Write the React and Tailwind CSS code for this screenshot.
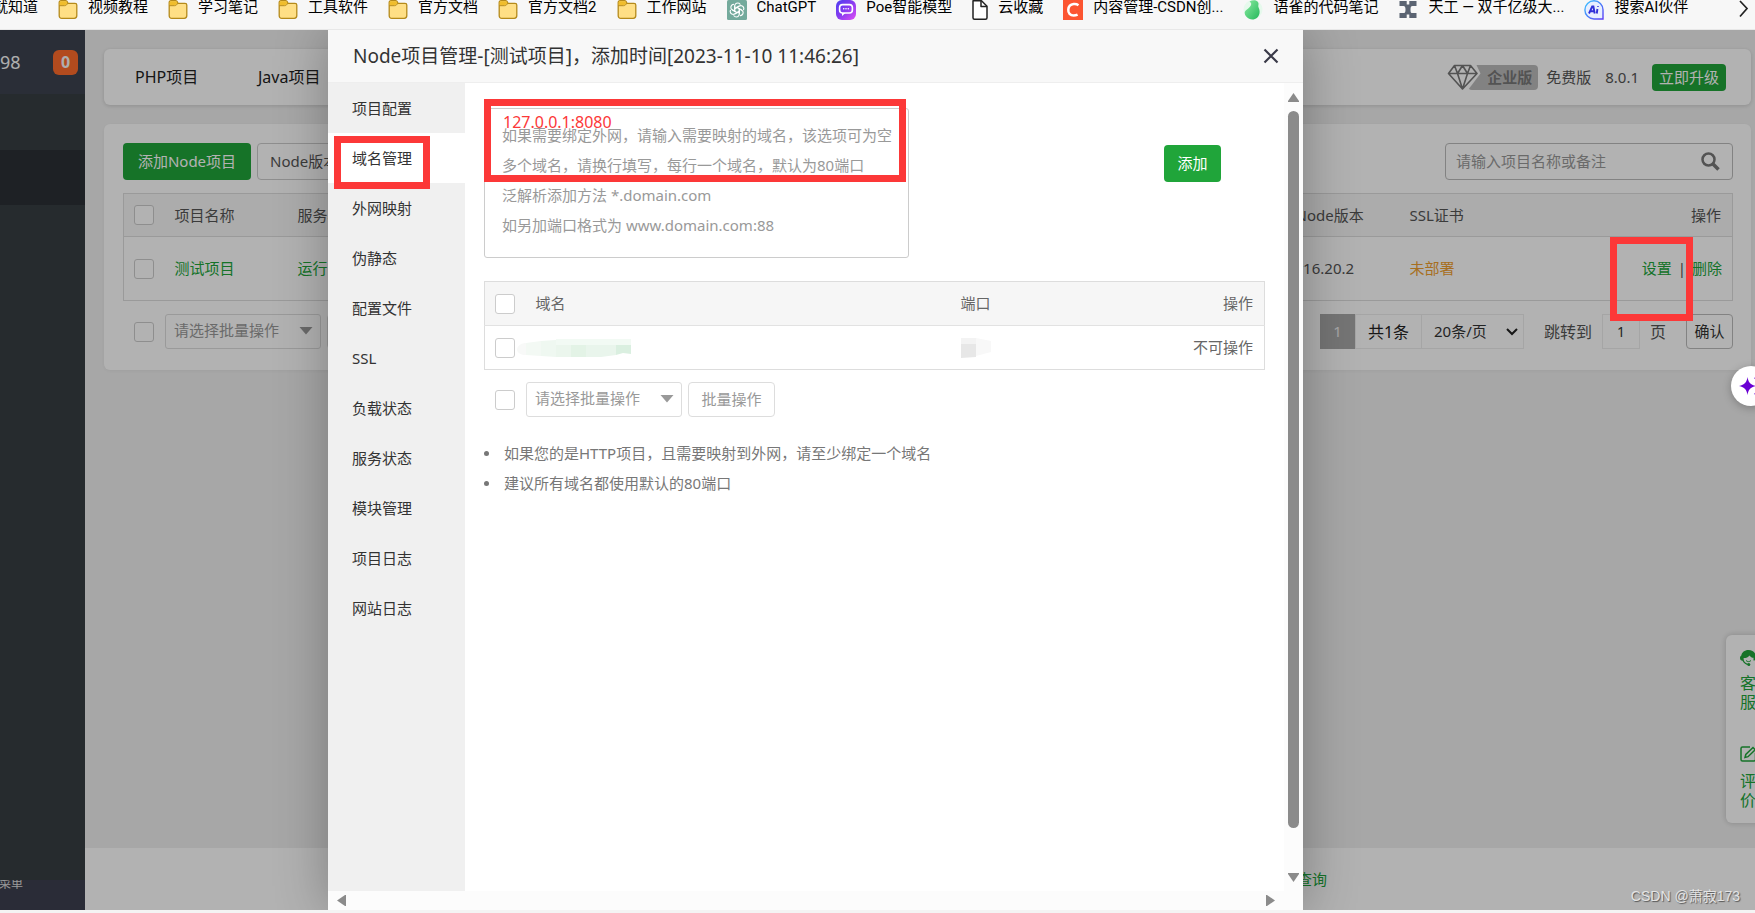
import React from "react";

const font = "font-['Noto_Sans','Noto_Sans_CJK_SC',sans-serif]";

function Folder() {
  return (
    <svg className="size-5 shrink-0" viewBox="0 0 20 20" fill="none">
      <path d="M1.2 15.5V2.5c0-1 .7-1.8 1.8-1.8h4.6c.9 0 1.5.5 1.8 1.3l.5 1.3H17c1 0 1.8.8 1.8 1.8v10.5c0 1.6-1 2.8-2.6 2.8H3.8c-1.6 0-2.6-1.2-2.6-2.900z" fill="#ffdf85" stroke="#b58a1b" strokeWidth="1.300" />
      <path d="M1.600 5.200V2.600c0-.8.5-1.400 1.400-1.400h4.500c.7 0 1.200.4 1.400 1l.3 1c-.4 1.200-1.200 2-2.500 2z" fill="#f0bd2d" />
      <path d="M1.300 5.700h5.200c1.600 0 2.400-.9 3-2.300" stroke="#b58a1b" strokeWidth="1" />
    </svg>
  );
}

function ChatGPT() {
  return (
    <svg className="size-5 shrink-0" viewBox="0 0 20 20" fill="none">
      <rect width="20" height="20" rx="1.500" fill="#74aa9c" />
      <g stroke="#fff" strokeWidth="1.100" strokeLinejoin="round" strokeLinecap="round">
        {[0, 60, 120, 180, 240, 300].map((a) => (
          <path key={a} transform={`rotate(${a} 10 10)`} d="M7.700 11.300V6.200c0-2 1.300-3.200 3-3.200 1 0 1.900.5 2.400 1.200M7.700 8.700l4.500-2.600" />
        ))}
      </g>
    </svg>
  );
}

function Poe() {
  return (
    <svg className="size-5 shrink-0" viewBox="0 0 20 20" fill="none">
      <defs>
        <linearGradient id="poe" x1="0" y1="0" x2="1" y2="1">
          <stop offset="0" stopColor="#4b3ff0" />
          <stop offset="0.500" stopColor="#8a3cf0" />
          <stop offset="1" stopColor="#e04ff5" />
        </linearGradient>
      </defs>
      <rect width="20" height="20" rx="6" fill="url(#poe)" />
      <rect x="3.600" y="4.600" width="12.800" height="8.400" rx="3" stroke="#fff" strokeWidth="1.600" />
      <path d="M6 13v3l3.500-3" fill="#fff" />
      <path d="M7.700 8.800h.01M10 8.800h.01M12.300 8.800h.01" stroke="#fff" strokeWidth="1.600" strokeLinecap="round" />
    </svg>
  );
}

function FileIcon() {
  return (
    <svg className="h-5 w-4 shrink-0" viewBox="2 0 16 20" fill="none" stroke="#222" strokeWidth="1.500" strokeLinejoin="round">
      <path d="M3 .8h8.500L17 6.200v11.500c0 .9-.6 1.500-1.500 1.500h-11c-.9 0-1.500-.6-1.500-1.500z" fill="#fff" />
      <path d="M11 .8v5.700h6" />
    </svg>
  );
}

function CsdnIcon() {
  return (
    <svg className="size-5 shrink-0" viewBox="0 0 20 20" fill="none">
      <rect width="20" height="20" fill="#fc5531" />
      <path d="M15.500 5.200c-1.400-1-3-1.400-4.800-1.200-3.200.3-5.200 2.500-5.400 5.600-.3 3.600 2 5.900 5.300 5.900 1.500 0 2.800-.3 4-.9" stroke="#fff" strokeWidth="2.500" />
    </svg>
  );
}

function YuqueIcon() {
  return (
    <svg className="size-5 shrink-0" viewBox="0 0 20 20" fill="none">
      <defs>
        <linearGradient id="yq" x1="0" y1="0" x2="1" y2="1">
          <stop offset="0" stopColor="#8deba3" />
          <stop offset="1" stopColor="#25b85a" />
        </linearGradient>
      </defs>
      <circle cx="10" cy="9.500" r="9.500" fill="#e6f9ec" />
      <path d="M6.500 1.500c3-1.800 6-1.800 8 0 .9.900 1.100 1.800 1 2.600 0 1.300-.6 2 .2 3.600 1.700 3.600 1 7.600-1.600 10-3 2.600-7.600 2.600-11.100-1.400-2-2.600-1.600-5.200.6-6.600C6 8.300 8.600 5.700 8.200 3.700 8 2.700 7.300 2 6.500 1.500z" fill="url(#yq)" />
    </svg>
  );
}

function TiangongIcon() {
  return (
    <svg className="size-5 shrink-0" viewBox="0 0 20 20" fill="#5b6472">
      <path d="M1.500 1h7.200v3.500h2.600V1h7.200v5h-4c-1.500 0-2 1-2 3.700s.5 3.300 2 3.300h4v5h-7.200v-3.500H8.700V18H1.500v-5h4c1.500 0 2-.8 2-3.300S7 6 5.500 6h-4z" />
    </svg>
  );
}

function AiIcon() {
  return (
    <svg className="size-5 shrink-0" viewBox="0 0 20 20" fill="none">
      <defs>
        <linearGradient id="ai" x1="0" y1="0" x2="1" y2="1">
          <stop offset="0" stopColor="#3cc8ff" />
          <stop offset="1" stopColor="#5b3df5" />
        </linearGradient>
      </defs>
      <path d="M10 .8a9 9 0 0 1 9 9V19h-9A9 9 0 0 1 10 .8z" fill="#e8efff" stroke="url(#ai)" strokeWidth="1.400" />
      <path d="M5 13.500 8.200 6.500h1.200l1.300 7M6.800 11.200h3.400M13.400 9l-.6 4.500M14 6v.8" stroke="#3030d8" strokeWidth="1.900" />
    </svg>
  );
}

const bookmarks = [
  [Folder, "视频教程"],
  [Folder, "学习笔记"],
  [Folder, "工具软件"],
  [Folder, "官方文档"],
  [Folder, "官方文档2"],
  [Folder, "工作网站"],
  [ChatGPT, "ChatGPT"],
  [Poe, "Poe智能模型"],
  [FileIcon, "云收藏"],
  [CsdnIcon, "内容管理-CSDN创..."],
  [YuqueIcon, "语雀的代码笔记"],
  [TiangongIcon, "天工 — 双千亿级大..."],
  [AiIcon, "搜索AI伙伴"],
];

function BookmarkBar() {
  return (
    <nav aria-label="书签" className="flex h-[30px] shrink-0 items-start overflow-hidden border-b border-[#e8e8e8] bg-[#f7f7f7] font-['Roboto','Noto_Sans_CJK_SC',sans-serif] text-[15px] leading-[15px] text-black">
      <a href="#b" className="-ml-[7px] mr-5 whitespace-nowrap">就知道</a>
      {bookmarks.map(([Icon, label]) => (
        <a key={label} href="#b" className="mr-5 flex shrink-0 gap-[10px] whitespace-nowrap">
          <Icon />
          <span>{label}</span>
        </a>
      ))}
      <button aria-label="更多书签" className="ml-auto mr-1">
        <svg className="h-[18px] w-4" viewBox="0 0 16 18" fill="none" stroke="#222" strokeWidth="1.700">
          <path d="M5 1l7 7.500L5 16.500" />
        </svg>
      </button>
    </nav>
  );
}

function Check({ label }) {
  return <input type="checkbox" aria-label={label} className="block size-5 shrink-0 appearance-none rounded-[3px] border border-[#ccc] bg-white" />;
}

function BulkSelect() {
  return (
    <div className="relative h-[35px] w-[156px]">
      <select aria-label="批量操作" className="size-full appearance-none rounded-[3px] border border-[#ddd] bg-white pl-2 pb-[2px] text-[15px] text-[#999]">
        <option>请选择批量操作</option>
      </select>
      <svg className="pointer-events-none absolute right-2 top-[13px] h-2 w-[14px]" viewBox="0 0 14 8" fill="#999">
        <path d="M.5 0h13L7 7.500z" />
      </svg>
    </div>
  );
}

function Sidebar() {
  return (
    <aside className="flex w-[85px] shrink-0 flex-col bg-[#373e43]">
      <div className="flex h-16 items-center justify-between bg-[#3d434f] pr-[7px] text-lg text-[#fafafa]">
        <span>98</span>
        <span className="flex size-[25px] items-center justify-center rounded-md bg-[#ff6c2c] text-base font-bold">0</span>
      </div>
      <div className="h-14" />
      <div className="h-[55px] bg-[#2c3036]" />
      <div className="flex-1" />
      <div className="h-[30px] overflow-hidden bg-[#3d404f] text-xs leading-[8px] text-[#ddd]">
        <span className="-ml-px">菜单</span>
      </div>
    </aside>
  );
}

function TopPanel() {
  return (
    <header className="flex h-14 items-center rounded-md bg-white pl-[31px] pr-[25px] text-[15px] text-[#555] shadow-[0_1px_4px_rgba(0,0,0,0.15)]">
      <a href="#php" className="w-[123px] text-base text-[#222]">PHP项目</a>
      <a href="#java" className="text-base text-[#222]">Java项目</a>
      <div className="ml-auto flex items-center">
        <svg className="relative -mr-[13px] h-[26px] w-[34px]" viewBox="0 0 34 26" fill="none" stroke="#777" strokeWidth="1.600" strokeLinejoin="round">
          <path d="M0 0h29l4.500 9.500L21 26H0z" fill="#fff" stroke="none" />
          <path d="M7.500 1.500h16l6.500 8L15.500 25 1.500 9.500zM1.500 9.500H30M7.500 1.500l3 8 5 15.500 5-15.500 3-8M10.500 9.500l5-8 5 8" />
        </svg>
        <span className="flex h-[25px] w-[70px] items-center justify-end rounded-sm bg-[#bbb] pr-[6px] font-bold text-[#777]">企业版</span>
        <span className="ml-2">免费版</span>
        <span className="ml-[14px]">8.0.1</span>
        <button className="ml-[13px] h-[27px] w-[74px] rounded bg-[#20a53a] text-white">立即升级</button>
      </div>
    </header>
  );
}

function ProjectPanel() {
  return (
    <section className="mt-[19px] h-[246px] rounded-md bg-white pl-[19px] pr-[18px] pt-[19px] text-[15px] text-[#555] shadow-[0_1px_4px_rgba(0,0,0,0.05)]">
      <div className="flex h-[37px] gap-[6px]">
        <button className="w-32 rounded bg-[#20a53a] text-white">添加Node项目</button>
        <button className="rounded border border-[#ccc] px-3">Node版本管理</button>
        <label className="ml-auto flex w-[288px] items-center rounded-sm border border-[#bbb] pl-[10px] pr-3">
          <input aria-label="搜索" placeholder="请输入项目名称或备注" className="min-w-0 flex-1 bg-transparent outline-none placeholder:text-[#999]" />
          <svg className="size-[19px]" viewBox="0 0 19 19" fill="none" stroke="#777">
            <circle cx="7.500" cy="7.500" r="6" strokeWidth="2.500" />
            <path d="M12 12l5.500 5.500" strokeWidth="3.500" />
          </svg>
        </label>
      </div>
      <table className="mt-[13px] w-full table-fixed border border-[#ddd] text-left">
        <thead>
          <tr className="h-[43px] border-b border-[#ddd] bg-[#f6f6f6]">
            <th className="w-[41px] pl-[10px]"><Check label="全选项目" /></th>
            <th className="w-[123px] pl-[10px] font-normal">项目名称</th>
            <th className="pl-[10px] font-normal">服务状态</th>
            <th className="w-[114px] pl-[10px] font-normal">Node版本</th>
            <th className="w-[160px] pl-[10px] font-normal">SSL证书</th>
            <th className="w-[173px] pr-[11px] text-right font-normal">操作</th>
          </tr>
        </thead>
        <tbody>
          <tr className="h-16">
            <td className="pl-[10px]"><Check label="测试项目" /></td>
            <td className="pl-[10px]"><a href="#p" className="text-[#20a53a]">测试项目</a></td>
            <td className="pl-[10px] text-[#20a53a]">运行中</td>
            <td className="pl-[10px]">v16.20.2</td>
            <td className="pl-[10px] text-[#f0a030]">未部署</td>
            <td className="pr-[10px]">
              <div className="flex justify-end gap-[6px]">
                <a href="#set" className="text-[#20a53a]">设置</a>
                <span>|</span>
                <a href="#del" className="text-[#20a53a]">删除</a>
              </div>
            </td>
          </tr>
        </tbody>
      </table>
      <div className="mt-[13px] flex items-center">
        <div className="ml-[11px] mr-[11px]"><Check label="全选" /></div>
        <BulkSelect />
        <button className="ml-[6px] h-[35px] rounded-sm border border-[#ddd] px-3 text-[#999]">批量操作</button>
        <div className="ml-auto flex h-[35px] items-center text-[#333]">
          <button className="h-full w-[35px] bg-[#a8a8a8] text-[#eee]">1</button>
          <span className="flex h-full w-[67px] items-center justify-center border border-[#ececec] text-base text-[#222]">共1条</span>
          <span className="relative h-full w-[102px]">
            <select aria-label="每页条数" className="size-full appearance-none border border-l-0 border-[#ececec] pl-3">
              <option>20条/页</option>
            </select>
            <svg className="pointer-events-none absolute right-[6px] top-[14px] h-2 w-3" viewBox="0 0 12 8" fill="none" stroke="#222" strokeWidth="2">
              <path d="M1 1l5 5 5-5" />
            </svg>
          </span>
          <span className="ml-5 text-base text-[#555]">跳转到</span>
          <input aria-label="页码" defaultValue="1" className="ml-[10px] h-full w-[38px] border border-[#ececec] text-center text-sm" />
          <span className="ml-[10px] text-base text-[#555]">页</span>
          <button className="ml-5 h-full w-[47px] rounded-sm border border-[#bbb] text-center">确认</button>
        </div>
      </div>
    </section>
  );
}

const menu = ["项目配置", "域名管理", "外网映射", "伪静态", "配置文件", "SSL", "负载状态", "服务状态", "模块管理", "项目日志", "网站日志"];

const placeholder =
  "如果需要绑定外网，请输入需要映射的域名，该选项可为空\n多个域名，请换行填写，每行一个域名，默认为80端口\n泛解析添加方法 *.domain.com\n如另加端口格式为 www.domain.com:88";

function DomainPane() {
  return (
    <div className="min-w-0 flex-1 pl-[19px] pr-[19px] pt-[25px] text-[15px] text-[#666]">
      <div className="flex items-start justify-between pr-11">
        <div className="relative">
          <textarea
            aria-label="域名"
            placeholder={placeholder}
            className="block h-[150px] w-[425px] resize-none overflow-hidden rounded-[3px] border border-[#ccc] pl-[17px] pr-1 pt-[11px] text-[15px] leading-[30px] placeholder:text-[#999]"
          />
          <span className="absolute left-[19px] top-1 text-base leading-5 text-[#fc3838]">127.0.0.1:8080</span>
          <div className="pointer-events-none absolute left-0 -top-[9px] h-[83px] w-[422px] border-[7px] border-[#fc3838]" />
        </div>
        <button className="mt-[37px] h-[37px] w-[57px] rounded bg-[#20a53a] text-white">添加</button>
      </div>
      <table className="mt-[23px] w-full table-fixed border border-[#ddd] text-left">
        <thead>
          <tr className="h-11 border-b border-[#e2e2e2] bg-[#f6f6f6]">
            <th className="w-[41px] pl-[10px]"><Check label="全选域名" /></th>
            <th className="w-[425px] pl-[10px] font-normal">域名</th>
            <th className="pl-[10px] font-normal">端口</th>
            <th className="pr-[11px] text-right font-normal">操作</th>
          </tr>
        </thead>
        <tbody>
          <tr className="h-11">
            <td className="pl-[10px]"><Check label="选择域名" /></td>
            <td>
              <svg className="-ml-[10px] h-5 w-[115px]" viewBox="0 0 115 20">
                <path d="M1 11c1-4 5-6 9-6v12c-5 0-9-2-9-6z" fill="#f8f9f8" />
                <path d="M10 5l15-2v15l-15-1z" fill="#f3f9f4" />
                <path d="M25 3l15-1v17l-15-1z" fill="#eff8f1" />
                <path d="M40 2l15-1v18H40z" fill="#ebf6ed" />
                <path d="M55 1h15v18H55z" fill="#e3f3e6" />
                <path d="M70 1h30v16l-15 2H70z" fill="#e9f5ec" />
                <path d="M100 1h15v15l-8-1-7 2z" fill="#daefe0" />
                <path d="M40 1h75v6H40z" fill="#f2faf4" />
              </svg>
            </td>
            <td className="pl-[10px]">
              <svg className="h-5 w-[30px]" viewBox="0 0 30 20">
                <path d="M0 0h15v6H0z" fill="#f3f3f3" />
                <path d="M0 6h15v13L0 20z" fill="#e7e7e7" />
                <path d="M15 0l15 3v11l-15 4z" fill="#f8f8f8" />
              </svg>
            </td>
            <td className="pr-[11px] text-right">不可操作</td>
          </tr>
        </tbody>
      </table>
      <div className="mt-3 flex items-center">
        <div className="ml-[11px] mr-[11px]"><Check label="全选" /></div>
        <BulkSelect />
        <button className="ml-[6px] h-[35px] w-[87px] rounded border border-[#ddd] text-[#999]">批量操作</button>
      </div>
      <ul className="mt-[21px] leading-[30px] text-[#777]">
        {["如果您的是HTTP项目，且需要映射到外网，请至少绑定一个域名", "建议所有域名都使用默认的80端口"].map((t) => (
          <li key={t} className="flex items-center gap-[15px]">
            <span className="size-[5px] rounded-full bg-[#777]" />
            {t}
          </li>
        ))}
      </ul>
    </div>
  );
}

function Modal() {
  return (
    <div role="dialog" aria-label="Node项目管理" className="absolute inset-y-0 left-[328px] flex w-[975px] flex-col bg-white shadow-[1px_1px_50px_rgba(0,0,0,0.3)]">
      <div className="flex h-[53px] shrink-0 items-center justify-between border-b border-[#eee] bg-[#f8f8f8] pl-[25px] pr-6 text-[19px] text-[#333]">
        <h2>Node项目管理-[测试项目]，添加时间[2023-11-10 11:46:26]</h2>
        <button aria-label="关闭">
          <svg className="size-4" viewBox="0 0 16 16" fill="none" stroke="#3a3a48" strokeWidth="2.200">
            <path d="M1.500 1.500l13 13M14.500 1.500l-13 13" />
          </svg>
        </button>
      </div>
      <div className="flex min-h-0 flex-1">
        <ul className="w-[137px] shrink-0 bg-[#f0f0f0] text-[15px] text-[#333]">
          {menu.map((m) => (
            <li key={m} className={m === "域名管理" ? "relative bg-white" : "relative"}>
              <a href="#m" className="flex h-[50px] items-center pl-6">{m}</a>
              {m === "域名管理" && <div className="pointer-events-none absolute left-[6px] top-[3px] z-10 h-[53px] w-24 border-[7px] border-[#fc3838]" />}
            </li>
          ))}
        </ul>
        <DomainPane />
        <div className="flex w-[19px] shrink-0 flex-col items-center bg-[#fcfcfc] pb-[9px] pt-[10px]">
          <svg className="h-[9px] w-[11px]" viewBox="0 0 11 9" fill="#8b8b8b"><path d="M5.500 0L11 8v1H0V8z" /></svg>
          <div className="mt-[9px] mb-[45px] w-[11px] flex-1 rounded-full bg-[#8b8b8b]" />
          <svg className="h-[9px] w-[11px]" viewBox="0 0 11 9" fill="#8b8b8b"><path d="M5.500 9L11 1V0H0v1z" /></svg>
        </div>
      </div>
      <div className="flex h-[19px] shrink-0 items-center justify-between bg-[#fcfcfc] pl-[9px] pr-[28px]">
        <svg className="h-[11px] w-[9px]" viewBox="0 0 9 11" fill="#8b8b8b"><path d="M0 5.500L8 0h1v11H8z" /></svg>
        <svg className="h-[11px] w-[9px]" viewBox="0 0 9 11" fill="#8b8b8b"><path d="M9 5.500L1 0H0v11h1z" /></svg>
      </div>
    </div>
  );
}

function ServiceDock() {
  return (
    <div className="absolute -right-4 top-[605px] flex h-[188px] w-[45px] flex-col rounded-md bg-white pl-[14px] pt-[15px] text-base leading-[19px] text-[#20a53a] shadow-[0_0_6px_rgba(0,0,0,0.2)]">
      <svg className="h-4 w-[17px]" viewBox="0 0 17 16" fill="#20a53a">
        <path d="M8.500 0C4.500 0 1.800 2.300 1.300 5.600.5 6 0 6.800 0 8c0 1.700 1 2.800 2.500 2.800C3.700 13.500 6 15 8.500 15v-1.200c-2 0-4-1.400-4.700-3.600L3.600 8c2.600 0 4.800-1 6-2.600 1 1.400 2.300 2.200 3.900 2.400v2.600h1c1.500 0 2.500-1 2.500-2.500 0-1.100-.5-1.900-1.300-2.300C15.200 2.300 12.500 0 8.500 0z" />
        <path d="M6 10.500c1.500 1.500 3.500 1.500 5 0" stroke="#20a53a" fill="none" />
        <circle cx="8.800" cy="14.500" r="1.500" />
      </svg>
      <a href="#kf" className="mt-2 w-4">客服</a>
      <svg className="mt-[34px] h-4 w-[17px]" viewBox="0 0 17 16" fill="none" stroke="#20a53a" strokeWidth="1.500">
        <path d="M10 1H2.500C1.500 1 1 1.500 1 2.500v11c0 1 .5 1.500 1.500 1.500H14c1 0 1.500-.5 1.500-1.500V7" />
        <path d="M5 11.500l.8-3L13 1.500l2.200 2.200-7.200 7z" />
      </svg>
      <a href="#pj" className="mt-[10px] w-4">评价</a>
    </div>
  );
}

export default function App() {
  return (
    <div className={`${font} flex h-screen flex-col overflow-hidden bg-[#f4f4f4]`}>
      <BookmarkBar />
      <div className="relative mb-[3px] flex min-h-0 flex-1 overflow-hidden">
        <Sidebar />
        <div className="flex min-w-0 flex-1 flex-col bg-[#f0f0f0]">
          <main className="flex-1 pl-[19px] pr-1 pt-[19px]">
            <TopPanel />
            <ProjectPanel />
          </main>
          <footer className="flex h-[62px] items-center justify-end bg-white pr-[428px] text-[15px]">
            <a href="#q" className="text-[#20a53a]">查询</a>
          </footer>
        </div>
        <ServiceDock />
        <div className="absolute inset-0 bg-black/30" />
        <Modal />
        <div className="pointer-events-none absolute right-[62px] top-[207px] h-[84px] w-[83px] border-[7px] border-[#fc3838]" />
        <button aria-label="助手" className="absolute -right-4 top-[336px] flex h-10 w-10 items-center rounded-full bg-white pl-2 shadow-[0_2px_8px_rgba(0,0,0,0.25)]">
          <svg className="h-[18px] w-6 shrink-0" viewBox="0 0 24 18" fill="#6a00d4">
            <path d="M8.500 0c.9 5.400 2.800 7.800 8.500 9-5.700 1.200-7.600 3.600-8.500 9C7.600 12.600 5.700 10.200 0 9c5.700-1.200 7.600-3.600 8.500-9z" />
            <path d="M15.500.5h6v1.500h-6zM15.500 16h6v1.500h-6z" />
          </svg>
        </button>
        <span className="absolute bottom-1 right-[15px] font-['Liberation_Sans','Noto_Sans_CJK_SC',sans-serif] text-sm leading-5 text-[#e4e4e4] [text-shadow:1px_1px_1px_#555]">CSDN @萧寂173</span>
      </div>
    </div>
  );
}
